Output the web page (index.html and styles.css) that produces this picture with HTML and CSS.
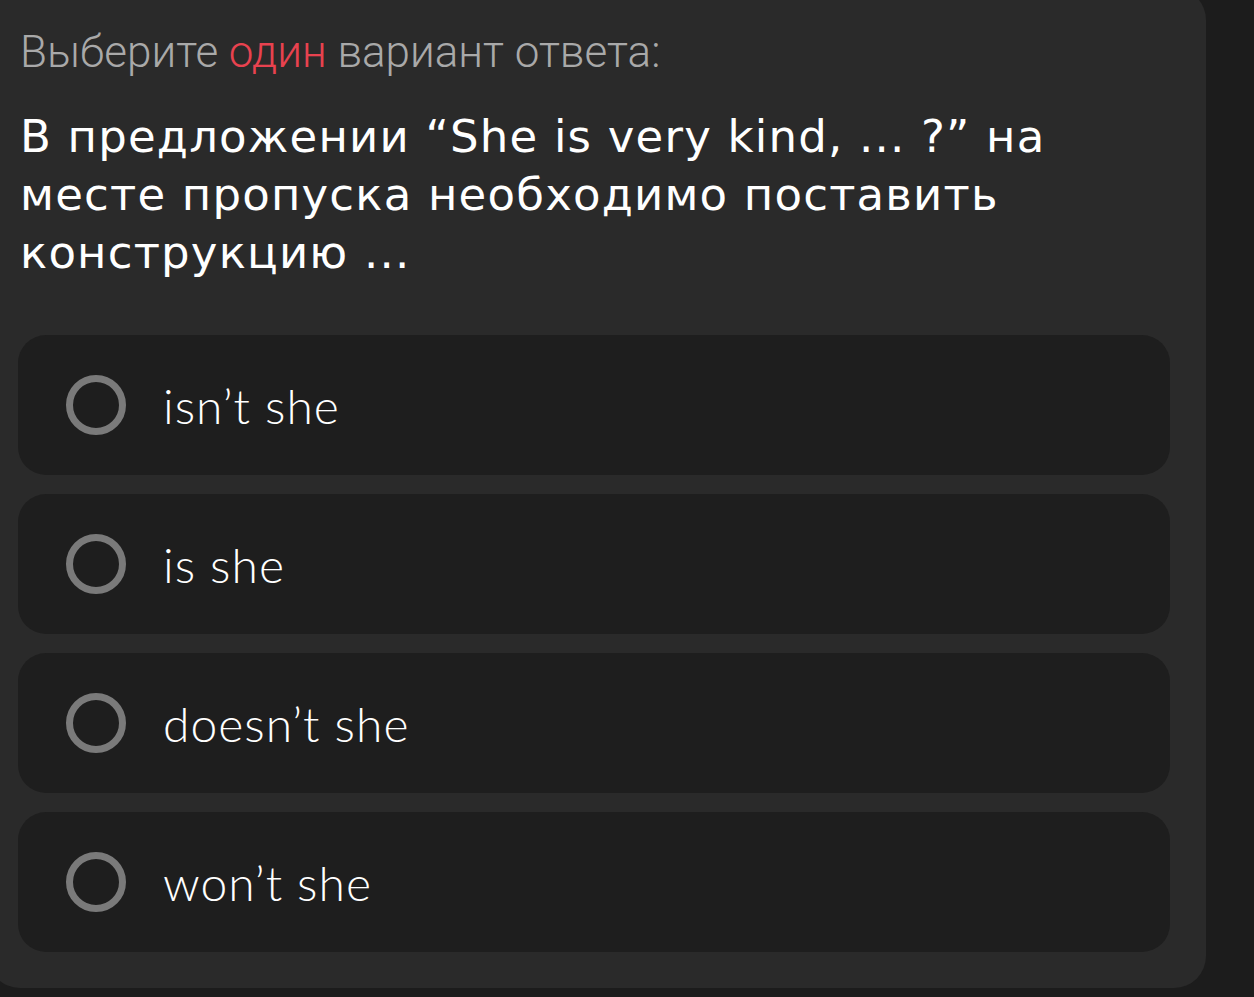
FILE: index.html
```html
<!DOCTYPE html>
<html lang="ru">
<head>
<meta charset="utf-8">
<title>Тест</title>
<link rel="stylesheet" href="styles.css">
</head>
<body>
<div class="panel">
  <p class="hint">Выберите <span class="accent">один</span> вариант ответа:</p>
  <h1 class="question">В предложении “She is very kind, ... ?” на месте пропуска необходимо поставить конструкцию ...</h1>
  <div class="options">
    <label class="option"><span class="radio"></span><span class="opt-text">isn’t she</span></label>
    <label class="option"><span class="radio"></span><span class="opt-text">is she</span></label>
    <label class="option"><span class="radio"></span><span class="opt-text">doesn’t she</span></label>
    <label class="option"><span class="radio"></span><span class="opt-text">won’t she</span></label>
  </div>
</div>
</body>
</html>
```
FILE: styles.css
```css
html, body {
  margin: 0;
  padding: 0;
  background: #1c1c1c;
  overflow: hidden;
}
body {
  width: 1254px;
  height: 997px;
}
.panel {
  box-sizing: border-box;
  width: 1218px;
  height: 1000px;
  margin: -12px 0 0 -12px;
  padding: 0 36px 0 30px;
  background: #2a2a2a;
  border-radius: 32px;
  display: flex;
  flex-direction: column;
}
.hint {
  margin: 38px 0 0 2px;
  font-family: Roboto, "Liberation Sans", sans-serif;
  font-weight: 300;
  font-size: 44px;
  line-height: 52px;
  color: #a9a9a9;
}
.accent {
  color: #e8424f;
}
.question {
  margin: 30px 0 0 2px;
  font-family: "DejaVu Sans", "Open Sans", sans-serif;
  font-weight: 400;
  font-size: 45px;
  line-height: 58px;
  letter-spacing: 1.2px;
  color: #ffffff;
  width: 1075px;
}
.options {
  margin-top: 53px;
  display: flex;
  flex-direction: column;
  gap: 19px;
}
.option {
  height: 140px;
  background: #1e1e1e;
  border-radius: 28px;
  display: flex;
  align-items: center;
  padding-left: 48px;
  gap: 37px;
}
.radio {
  box-sizing: border-box;
  width: 60px;
  height: 60px;
  border: 7px solid #7a7a7a;
  border-radius: 50%;
  flex: none;
}
.opt-text {
  font-family: Lato, "Liberation Sans", sans-serif;
  font-weight: 300;
  font-size: 48px;
  letter-spacing: 1px;
  color: #ffffff;
}
```
